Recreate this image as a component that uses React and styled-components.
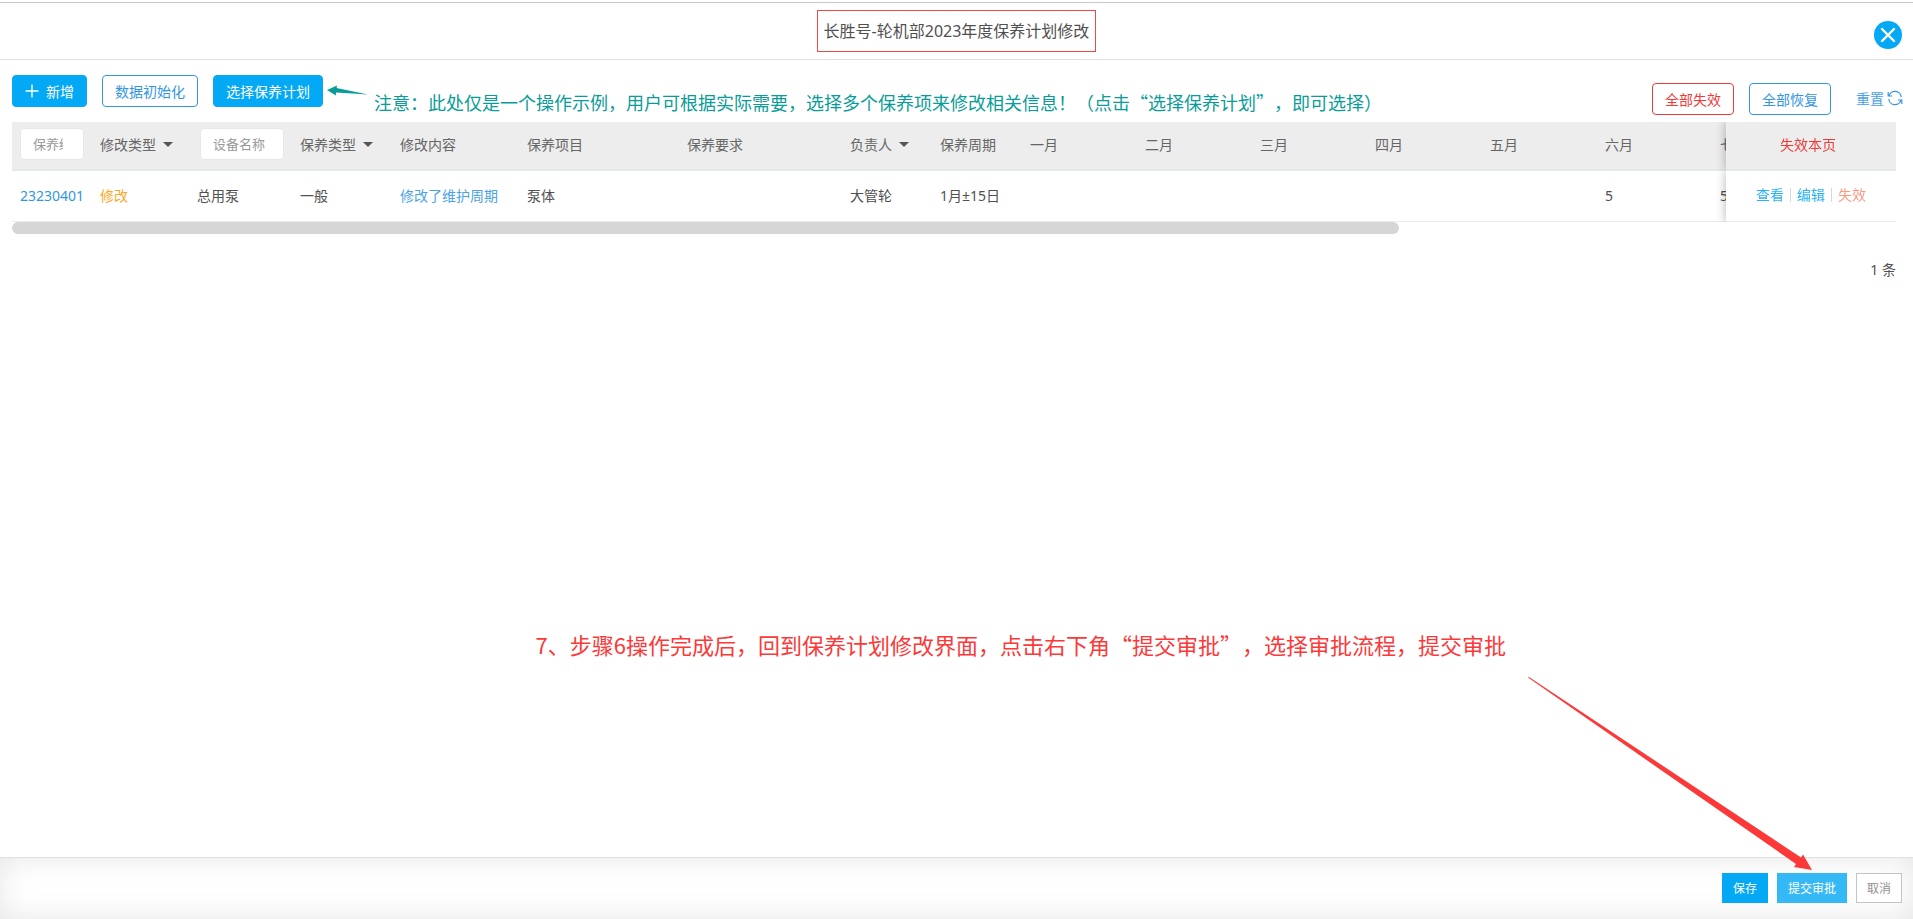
import React, { useState } from "react";
import styled, { createGlobalStyle } from "styled-components";

const columns = [
  { key: "code", width: 80, filter: "保养编号" },
  { key: "changeType", title: "修改类型", width: 97, menu: true },
  { key: "device", width: 103, filter: "设备名称" },
  { key: "keepType", title: "保养类型", width: 100, menu: true },
  { key: "content", title: "修改内容", width: 127 },
  { key: "item", title: "保养项目", width: 160 },
  { key: "demand", title: "保养要求", width: 163 },
  { key: "owner", title: "负责人", width: 90, menu: true },
  { key: "cycle", title: "保养周期", width: 90 },
  { key: "m1", title: "一月", width: 115 },
  { key: "m2", title: "二月", width: 115 },
  { key: "m3", title: "三月", width: 115 },
  { key: "m4", title: "四月", width: 115 },
  { key: "m5", title: "五月", width: 115 },
  { key: "m6", title: "六月", width: 115 },
  { key: "m7", title: "七月", width: 115 },
];

const cellColors = {
  code: "#3296e1",
  changeType: "#ffa726",
  content: "#4aa3e6",
};

const rows = [
  {
    code: "23230401",
    changeType: "修改",
    device: "总用泵",
    keepType: "一般",
    content: "修改了维护周期",
    item: "泵体",
    owner: "大管轮",
    cycle: "1月±15日",
    m6: "5",
    m7: "5",
  },
];

function App() {
  const [filters, setFilters] = useState({ code: "", device: "" });

  return (
    <>
      <GlobalStyle />
      <Page>
        <Header>
          <Title>长胜号-轮机部2023年度保养计划修改</Title>
          <CloseButton aria-label='关闭'>
            <svg width='28' height='28' viewBox='0 0 28 28'>
              <path
                d='M8 8 L20 20 M20 8 L8 20'
                stroke='#fff'
                strokeWidth='2.4'
                strokeLinecap='round'
              />
            </svg>
          </CloseButton>
        </Header>

        <ToolBar>
          <ToolGroup>
            <ToolButton $primary>
              <svg width='14' height='14' viewBox='0 0 14 14'>
                <path d='M7 0.5 V13.5 M0.5 7 H13.5' stroke='#fff' strokeWidth='1.4' />
              </svg>
              新增
            </ToolButton>
            <ToolButton>数据初始化</ToolButton>
            <ToolButton $primary>选择保养计划</ToolButton>
            <Tip>
              <svg width='41' height='12' viewBox='0 0 41 12'>
                <path
                  d='M0 5 L10 0.5 L9.6 3 L41 9.5 L9 7.6 L8.8 10.6 Z'
                  fill='#0a9c98'
                />
              </svg>
              <TipText>
                注意：此处仅是一个操作示例，用户可根据实际需要，选择多个保养项来修改相关信息！（点击“选择保养计划”，即可选择）
              </TipText>
            </Tip>
          </ToolGroup>
          <ToolGroup $low>
            <ToolButton $color='#f03a3a'>全部失效</ToolButton>
            <ToolButton>全部恢复</ToolButton>
            <ResetLink href='#reset'>
              重置
              <svg width='16' height='16' viewBox='0 0 16 16' fill='none'>
                <path
                  d='M2 6 A6.2 6.2 0 0 1 14.2 7 M14 10 A6.2 6.2 0 0 1 1.8 9'
                  stroke='#3296e1'
                  strokeWidth='1.2'
                />
                <path
                  d='M1.2 2 V6 H5.2 M14.8 14 V10 H10.8'
                  stroke='#3296e1'
                  strokeWidth='1.2'
                />
              </svg>
            </ResetLink>
          </ToolGroup>
        </ToolBar>

        <Content>
          <TableScroll>
            <Table>
              <colgroup>
                {columns.map((col) => (
                  <Col key={col.key} $width={col.width} />
                ))}
                <Col $width={170} />
              </colgroup>
              <thead>
                <tr>
                  {columns.map((col) => (
                    <Th key={col.key}>
                      {col.filter && (
                        <FilterInput
                          aria-label={col.filter}
                          placeholder={col.filter}
                          $wide={col.key === "device"}
                          value={filters[col.key]}
                          onChange={(e) =>
                            setFilters((prev) => ({
                              ...prev,
                              [col.key]: e.target.value,
                            }))
                          }
                        />
                      )}
                      {col.menu && (
                        <MenuButton>
                          {col.title}
                          <Caret />
                        </MenuButton>
                      )}
                      {!col.filter && !col.menu && col.title}
                    </Th>
                  ))}
                  <FixedTh>
                    <PlainButton>失效本页</PlainButton>
                  </FixedTh>
                </tr>
              </thead>
              <tbody>
                {rows.map((row) => (
                  <tr key={row.code}>
                    {columns.map((col) => (
                      <Td key={col.key} $color={cellColors[col.key]}>
                        {row[col.key]}
                      </Td>
                    ))}
                    <FixedTd>
                      <Actions>
                        <ActionLink href='#view'>查看</ActionLink>
                        <ActionLink href='#edit'>编辑</ActionLink>
                        <ActionLink href='#disable' $color='#ff9880'>
                          失效
                        </ActionLink>
                      </Actions>
                    </FixedTd>
                  </tr>
                ))}
              </tbody>
            </Table>
          </TableScroll>
          <ScrollThumb />
          <Total>{rows.length} 条</Total>
        </Content>

        <Footer>
          <FooterButton $bg='#03a9f4'>保存</FooterButton>
          <FooterButton $bg='#35b9f6'>提交审批</FooterButton>
          <FooterButton>取消</FooterButton>
        </Footer>

        <StepText>
          7、步骤6操作完成后，回到保养计划修改界面，点击右下角“提交审批”，选择审批流程，提交审批
        </StepText>
        <StepArrow width='286' height='194' viewBox='0 0 286 194'>
          <path
            d='M0 0.5 L1 0 L273 180.5 L275 177.5 L284 193 L266 190 L268 187 Z'
            fill='#fd3838'
          />
        </StepArrow>
      </Page>
    </>
  );
}

const GlobalStyle = createGlobalStyle`
  body {
    margin: 0;
    background-color: #ffffff;
  }

  body, button, input {
    font-family: "Noto Sans", "Noto Sans CJK SC", sans-serif;
    font-size: 14px;
    font-weight: 400;
    color: #505050;
  }
`;

const Page = styled.div`
  min-height: 100vh;
  display: flex;
  flex-direction: column;
  position: relative;
  overflow: hidden;
  box-sizing: border-box;
  padding-top: 2px;
`;

const Header = styled.header`
  height: 58px;
  border-top: 1px solid #c8c8c8;
  border-bottom: 1px solid #e2e2e2;
  display: flex;
  justify-content: center;
  align-items: center;
  position: relative;
  box-sizing: border-box;
`;

const Title = styled.h1`
  height: 42px;
  margin: 0;
  padding: 0 6px;
  border: 1px solid #f04848;
  box-sizing: border-box;

  font-size: 16px;
  font-weight: 400;
  line-height: 40px;
`;

const CloseButton = styled.button`
  width: 28px;
  height: 28px;
  padding: 0;
  border: none;
  border-radius: 50%;
  background-color: #03a9f4;
  position: absolute;
  top: 18px;
  right: 11px;

  cursor: pointer;

  svg {
    display: block;
  }
`;

const ToolBar = styled.div`
  padding: 15px 10px 7px 12px;
  display: flex;
  justify-content: space-between;
  align-items: flex-start;
`;

const ToolGroup = styled.div`
  padding-top: ${({ $low }) => ($low ? "8px" : "0")};
  display: flex;
  align-items: center;
  gap: 15px;
`;

const ToolButton = styled.button`
  height: 32px;
  padding: 0 12px;
  border: 1px solid
    ${({ $primary, $color }) => ($primary ? "#03a9f4" : $color || "#3296e1")};
  border-radius: 4px;
  background-color: ${({ $primary }) => ($primary ? "#03a9f4" : "#ffffff")};
  display: flex;
  align-items: center;
  gap: 7px;

  color: ${({ $primary, $color }) =>
    $primary ? "#ffffff" : $color || "#3296e1"};
  white-space: nowrap;

  cursor: pointer;
`;

const Tip = styled.div`
  height: 32px;
  margin-left: -11px;
  display: flex;
  align-items: center;
  gap: 6px;
`;

const TipText = styled.span`
  padding-top: 22px;
  line-height: 32px;

  font-family: "Noto Sans CJK SC", sans-serif;
  font-size: 18px;
  color: #0a9c98;
  white-space: nowrap;
  text-spacing-trim: space-all;
`;

const ResetLink = styled.a`
  margin-left: 10px;
  padding-bottom: 2px;
  display: flex;
  align-items: center;
  gap: 3px;

  color: #4aa3e6;
  text-decoration: none;
  white-space: nowrap;
`;

const Content = styled.main`
  flex: 1;
  padding: 0 17px 0 12px;
`;

const TableScroll = styled.div`
  overflow-x: auto;
  scrollbar-width: none;
`;

const Table = styled.table`
  width: 1985px;
  table-layout: fixed;
  border-collapse: separate;
  border-spacing: 0;
`;

const Col = styled.col`
  width: ${({ $width }) => $width}px;
`;

const Th = styled.th`
  height: 49px;
  padding: 0 8px 3px;
  border-bottom: 2px solid #e3e8ec;
  background-color: #ededed;
  box-sizing: border-box;

  font-weight: 400;
  color: #666666;
  text-align: left;
  white-space: nowrap;
`;

const Td = styled.td`
  height: 51px;
  padding: 0 8px 2px;
  border-bottom: 1px solid #ebebeb;
  box-sizing: border-box;

  color: ${({ $color }) => $color || "#505050"};
  white-space: nowrap;
`;

const FixedTh = styled(Th)`
  padding-right: 14px;
  position: sticky;
  right: 0;
  box-shadow: 0 0 10px rgba(0, 0, 0, 0.3);
  clip-path: inset(0 0 0 -12px);

  text-align: center;
`;

const FixedTd = styled(Td)`
  background-color: #ffffff;
  position: sticky;
  right: 0;
  box-shadow: 0 0 10px rgba(0, 0, 0, 0.3);
  clip-path: inset(0 0 0 -12px);
`;

const FilterInput = styled.input`
  width: ${({ $wide }) => ($wide ? "84px" : "64px")};
  height: 32px;
  margin: 0 0 0 ${({ $wide }) => ($wide ? "3px" : "0")};
  padding: 0 ${({ $wide }) => ($wide ? "12px" : "20px")} 0 12px;
  border: 1px solid #e3e8ec;
  border-radius: 4px;
  background-color: #ffffff;
  display: block;
  box-sizing: border-box;

  font-size: 13px;

  &::placeholder {
    color: #999999;
  }
`;

const MenuButton = styled.button`
  padding: 0;
  border: none;
  background-color: transparent;
  display: flex;
  align-items: center;
  gap: 7px;

  color: #666666;

  cursor: pointer;
`;

const Caret = styled.span`
  border-top: 5px solid #555555;
  border-left: 5px solid transparent;
  border-right: 5px solid transparent;
`;

const PlainButton = styled.button`
  padding: 0;
  border: none;
  background-color: transparent;

  color: #f03a3a;

  cursor: pointer;
`;

const Actions = styled.div`
  display: flex;
  justify-content: center;
  align-items: center;
`;

const ActionLink = styled.a`
  padding: 0 6px;
  line-height: 14px;

  color: ${({ $color }) => $color || "#2ab1f5"};
  text-decoration: none;

  & + & {
    border-left: 1px solid #d8d8d8;
  }
`;

const ScrollThumb = styled.div`
  width: 73.6%;
  height: 12px;
  border-radius: 6px;
  background-color: #d6d6d6;
`;

const Total = styled.p`
  margin: 26px 0 0;
  line-height: 20px;

  text-align: right;
`;

const Footer = styled.footer`
  height: 62px;
  padding: 0 11px 1px 0;
  border-top: 1px solid #e0e0e0;
  box-shadow: inset 0 0 30px rgba(0, 0, 0, 0.1);
  display: flex;
  justify-content: flex-end;
  align-items: center;
  gap: 9px;
  box-sizing: border-box;
`;

const FooterButton = styled.button`
  height: 30px;
  padding: 0 10px;
  border: 1px solid ${({ $bg }) => $bg || "#c4c4c8"};
  background-color: ${({ $bg }) => $bg || "#ffffff"};

  font-size: 12px;
  color: ${({ $bg }) => ($bg ? "#ffffff" : "#909090")};

  cursor: pointer;
`;

const StepText = styled.p`
  margin: 0;
  position: absolute;
  right: 407px;
  bottom: 259px;

  font-family: "Noto Sans CJK SC", sans-serif;
  font-size: 22px;
  line-height: 32px;
  color: #fd3838;
  white-space: nowrap;
  text-spacing-trim: space-all;
`;

const StepArrow = styled.svg`
  position: absolute;
  right: 99px;
  bottom: 48px;
  pointer-events: none;
`;

export default App;
